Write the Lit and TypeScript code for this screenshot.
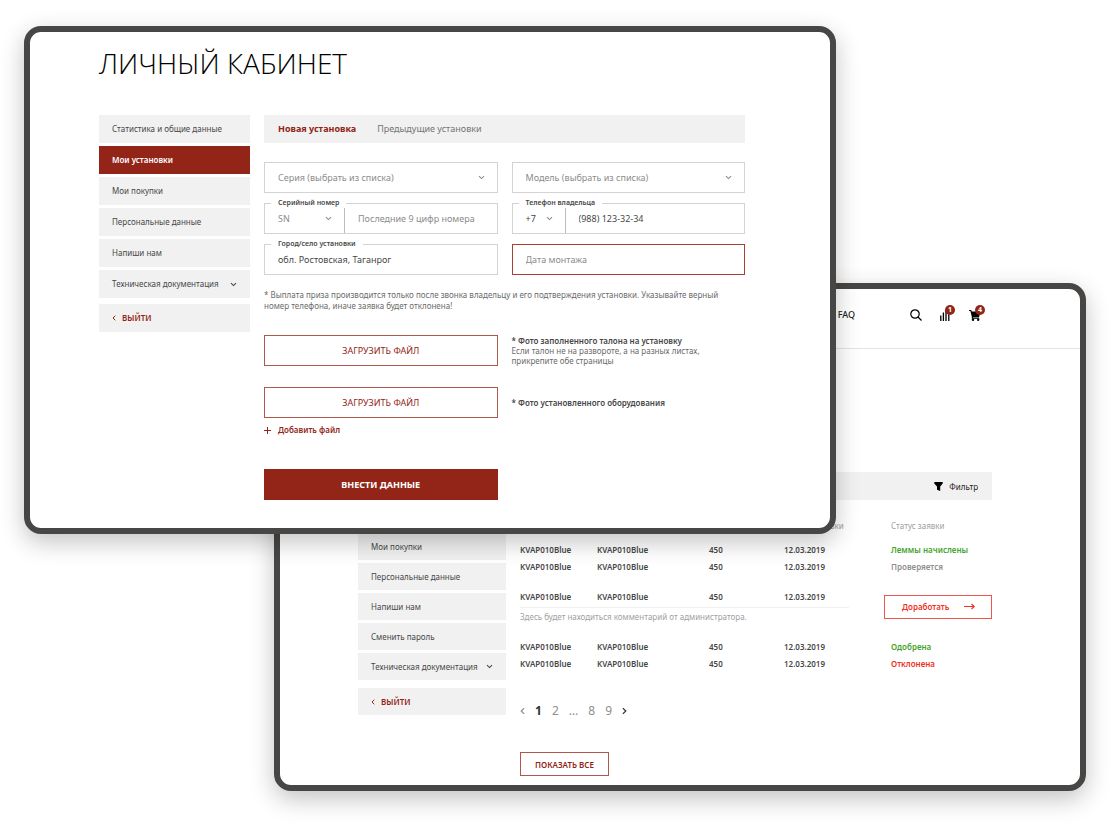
import { LitElement, html, css, svg, nothing } from "lit";
import { customElement, property } from "lit/decorators.js";
import { classMap } from "lit/directives/class-map.js";

const shared = css`
  :host {
    display: block;
  }
  *,
  *::before,
  *::after {
    box-sizing: border-box;
  }
  svg {
    display: block;
    flex: none;
  }
  button,
  input,
  select {
    font: inherit;
    color: inherit;
    background: none;
    border: 0;
    border-radius: 0;
    margin: 0;
    padding: 0;
    appearance: none;
  }
  button {
    cursor: pointer;
  }
  a {
    color: inherit;
    text-decoration: none;
  }
`;

const chevronDown = (size = 7) => svg`
  <svg class="chevron" width=${size} height=${size} viewBox="0 0 7 7" fill="none" stroke="currentColor" stroke-width="1.1" aria-hidden="true">
    <path d="M1 2.2 3.5 4.6 6 2.2" />
  </svg>`;

const chevronLeft = (w = 4, h = 6) => svg`
  <svg width=${w} height=${h} viewBox="0 0 4 6" fill="none" stroke="currentColor" stroke-width="1" aria-hidden="true">
    <path d="M3.3 .7 1 3l2.3 2.3" />
  </svg>`;

/** Navigation column of the personal account. */
@customElement("side-menu")
class SideMenu extends LitElement {
  @property({ attribute: false }) items: string[] = [];
  @property() current = "";
  @property({ type: Boolean, reflect: true }) compact = false;

  static styles = [
    shared,
    css`
      :host {
        --item-height: 28px;
        font-size: 8px;
        line-height: 12px;
        color: #474747;
      }
      :host([compact]) {
        --item-height: 27px;
      }
      .list {
        display: grid;
        gap: 3px;
        margin: 0 0 6px;
        padding: 0;
        list-style: none;
      }
      :host([compact]) .list {
        margin-bottom: 8px;
      }
      .item {
        display: flex;
        align-items: center;
        justify-content: space-between;
        min-height: var(--item-height);
        padding: 0 13px;
        background: #f1f1f1;
        white-space: nowrap;
      }
      .current {
        background: #922517;
        color: #fff;
        font-weight: 600;
      }
      .exit {
        justify-content: flex-start;
        gap: 6px;
        color: #922517;
        font-weight: 600;
      }
    `,
  ];

  render() {
    return html`
      <nav aria-label="Личный кабинет">
        <ul class="list">
          ${this.items.map(
            (item) => html`<li>
              <a
                href="#"
                class=${classMap({ item: true, current: item === this.current })}
                aria-current=${item === this.current ? "page" : nothing}
                >${item}${item === "Техническая документация" ? chevronDown() : nothing}</a
              >
            </li>`
          )}
        </ul>
        <a href="#" class="item exit">${chevronLeft()}ВЫЙТИ</a>
      </nav>
    `;
  }
}

/** Form for registering a new installation. */
@customElement("install-form")
class InstallForm extends LitElement {
  static styles = [
    shared,
    css`
      :host {
        font-size: 9px;
        line-height: 12px;
        color: #474747;
      }
      .tabs {
        display: flex;
        align-items: center;
        gap: 21px;
        min-height: 28px;
        padding: 0 14px;
        background: #f1f1f1;
        color: #757575;
      }
      .tab-active {
        color: #922517;
        font-weight: 700;
      }
      .fields {
        display: grid;
        grid-template-columns: repeat(2, minmax(0, 1fr));
        gap: 10px 14px;
        margin-top: 19px;
      }
      .field {
        position: relative;
        display: flex;
        height: 31px;
        border: 1px solid #d3d3d3;
      }
      .field.invalid {
        border-color: #a84034;
      }
      .caption {
        position: absolute;
        top: -6px;
        left: 6px;
        padding: 0 7px;
        background: #fff;
        font-size: 7px;
        line-height: 10px;
        font-weight: 600;
        white-space: nowrap;
      }
      .pick {
        display: grid;
        flex: 1;
        align-items: center;
        color: #8c8c8c;
      }
      .pick > * {
        grid-area: 1 / 1;
      }
      .pick select {
        width: 100%;
        height: 100%;
        padding: 0 13px;
      }
      .pick .chevron {
        justify-self: end;
        margin-right: 12px;
        pointer-events: none;
      }
      .serial {
        flex: 0 0 79px;
      }
      .code {
        flex: 0 0 52px;
      }
      .code select {
        color: #474747;
      }
      .text {
        flex: 1;
        min-width: 0;
        padding: 0 13px;
      }
      .split {
        border-left: 1px solid #bdbdbd;
      }
      .text::placeholder {
        color: #8c8c8c;
        opacity: 1;
      }
      .note {
        margin: 14px 0 24px;
        font-size: 8px;
        line-height: 11px;
        color: #6b6b6b;
      }
      .upload {
        display: grid;
        grid-template-columns: repeat(2, minmax(0, 1fr));
        column-gap: 14px;
        align-items: center;
      }
      .upload + .upload {
        margin-top: 21px;
      }
      .wide {
        height: 31px;
        border: 1px solid #b0574c;
        color: #922517;
      }
      .hint {
        margin: 0;
        font-size: 8px;
        line-height: 10px;
        color: #6b6b6b;
      }
      .hint b {
        display: block;
        font-weight: 600;
        color: #474747;
      }
      .add {
        display: flex;
        align-items: center;
        gap: 7px;
        margin-top: 7px;
        font-size: 8px;
        line-height: 10px;
        font-weight: 600;
        color: #922517;
      }
      .actions {
        display: grid;
        grid-template-columns: repeat(2, minmax(0, 1fr));
        column-gap: 14px;
        margin-top: 34px;
      }
      .submit {
        border-color: #922517;
        background: #922517;
        color: #fff;
        font-weight: 700;
      }
    `,
  ];

  render() {
    return html`
      <div class="tabs">
        <a href="#" class="tab-active">Новая установка</a>
        <a href="#">Предыдущие установки</a>
      </div>
      <form @submit=${(e: Event) => e.preventDefault()}>
        <div class="fields">
          <div class="field">
            <div class="pick">
              <select aria-label="Серия">
                <option>Серия (выбрать из списка)</option>
              </select>
              ${chevronDown()}
            </div>
          </div>
          <div class="field">
            <div class="pick">
              <select aria-label="Модель">
                <option>Модель (выбрать из списка)</option>
              </select>
              ${chevronDown()}
            </div>
          </div>
          <div class="field">
            <label class="caption" for="serial">Серийный номер</label>
            <div class="pick serial">
              <select aria-label="Префикс серийного номера">
                <option>SN</option>
              </select>
              ${chevronDown()}
            </div>
            <input id="serial" class="text split" placeholder="Последние 9 цифр номера" />
          </div>
          <div class="field">
            <label class="caption" for="phone">Телефон владельца</label>
            <div class="pick code">
              <select aria-label="Код страны">
                <option>+7</option>
              </select>
              ${chevronDown()}
            </div>
            <input id="phone" class="text split" type="tel" value="(988) 123-32-34" />
          </div>
          <div class="field">
            <label class="caption" for="city">Город/село установки</label>
            <input id="city" class="text" value="обл. Ростовская, Таганрог" />
          </div>
          <div class="field invalid">
            <input class="text" aria-label="Дата монтажа" placeholder="Дата монтажа" />
          </div>
        </div>
        <p class="note">
          * Выплата приза производится только после звонка владельцу и его подтверждения
          установки. Указывайте верный номер телефона, иначе заявка будет отклонена!
        </p>
        <div class="upload">
          <button type="button" class="wide">ЗАГРУЗИТЬ ФАЙЛ</button>
          <p class="hint">
            <b>* Фото заполненного талона на установку</b>
            Если талон не на развороте, а на разных листах,<br />прикрепите обе страницы
          </p>
        </div>
        <div class="upload">
          <button type="button" class="wide">ЗАГРУЗИТЬ ФАЙЛ</button>
          <p class="hint"><b>* Фото установленного оборудования</b></p>
        </div>
        <button type="button" class="add">
          <svg width="7" height="7" viewBox="0 0 7 7" stroke="currentColor" aria-hidden="true">
            <path d="M3.5 0v7M0 3.5h7" />
          </svg>
          Добавить файл
        </button>
        <div class="actions">
          <button type="submit" class="wide submit">ВНЕСТИ ДАННЫЕ</button>
        </div>
      </form>
    `;
  }
}

interface Claim {
  status: string;
  tone: string;
  gap?: boolean;
  comment?: string;
}

const claims: Claim[] = [
  { status: "Леммы начислены", tone: "good" },
  { status: "Проверяется", tone: "wait" },
  {
    status: "Доработать",
    tone: "rework",
    gap: true,
    comment: "Здесь будет находиться комментарий от администратора.",
  },
  { status: "Одобрена", tone: "good", gap: true },
  { status: "Отклонена", tone: "bad" },
];

/** Table of earlier installations with their claim statuses. */
@customElement("claims-list")
class ClaimsList extends LitElement {
  static styles = [
    shared,
    css`
      :host {
        font-size: 8px;
        line-height: 17px;
        color: #474747;
      }
      .bar {
        display: flex;
        align-items: center;
        justify-content: flex-end;
        min-height: 28px;
        padding: 0 14px;
        background: #f1f1f1;
      }
      .filter {
        display: flex;
        align-items: center;
        gap: 6px;
        color: #222;
      }
      .table {
        width: 100%;
        margin-top: 17px;
        table-layout: fixed;
        border-collapse: collapse;
      }
      .c-serial {
        width: 77px;
      }
      .c-model {
        width: 112px;
      }
      .c-sum {
        width: 75px;
      }
      .c-date {
        width: 100px;
      }
      th {
        padding: 0 0 7px;
        font-weight: 400;
        text-align: left;
        color: #a0a0a0;
        white-space: nowrap;
      }
      td {
        padding: 0;
        font-weight: 600;
        vertical-align: top;
        white-space: nowrap;
      }
      .gap td {
        padding-top: 13px;
      }
      .noted td {
        padding-bottom: 2px;
      }
      .status {
        padding-left: 7px;
      }
      .good {
        color: #46a32c;
      }
      .wait {
        color: #8f8f8f;
      }
      .bad {
        color: #ee3124;
      }
      .noted td.action {
        padding-bottom: 0;
        vertical-align: middle;
      }
      .rework {
        display: flex;
        align-items: center;
        justify-content: space-between;
        width: 100%;
        height: 24px;
        padding: 0 16px 0 17px;
        border: 1px solid #f0554b;
        color: #ee3124;
      }
      .comment {
        margin-right: 35px;
        border-top: 1px solid #efefef;
        font-weight: 400;
        color: #a0a0a0;
      }
      .pages {
        display: flex;
        align-items: center;
        gap: 10px;
        margin-top: 31px;
        font-size: 12px;
        line-height: 16px;
        color: #8f8f8f;
      }
      .page-current {
        font-weight: 700;
        color: #333;
      }
      .next {
        transform: scaleX(-1);
        color: #333;
      }
      .all {
        height: 24px;
        margin-top: 33px;
        padding: 0 14px;
        border: 1px solid #b0574c;
        font-weight: 600;
        color: #922517;
      }
    `,
  ];

  private row(c: Claim) {
    const cells = html`
      <td>KVAP010Blue</td>
      <td>KVAP010Blue</td>
      <td>450</td>
      <td>12.03.2019</td>
    `;
    if (!c.comment) {
      return html`<tr class=${classMap({ gap: !!c.gap })}>
        ${cells}
        <td class="status ${c.tone}">${c.status}</td>
      </tr>`;
    }
    return html`
      <tr class="gap noted">
        ${cells}
        <td class="action" rowspan="2">
          <button class="rework">
            ${c.status}
            <svg width="11" height="8" viewBox="0 0 11 8" fill="none" stroke="currentColor" stroke-width="1.2" aria-hidden="true">
              <path d="M0 3.5h10M7.6 1 10.1 3.5 7.6 6" />
            </svg>
          </button>
        </td>
      </tr>
      <tr>
        <td colspan="4"><div class="comment">${c.comment}</div></td>
      </tr>
    `;
  }

  render() {
    return html`
      <div class="bar">
        <button class="filter">
          <svg width="9" height="9" viewBox="0 0 9 9" fill="#000" aria-hidden="true">
            <path d="M.3 0h8.4v1.6L6.2 4.6V9L3 7.8V4.6L.3 1.6z" />
          </svg>
          Фильтр
        </button>
      </div>
      <table class="table">
        <colgroup>
          <col class="c-serial" />
          <col class="c-model" />
          <col class="c-sum" />
          <col class="c-date" />
          <col />
        </colgroup>
        <thead>
          <tr>
            <td colspan="3"></td>
            <th scope="col">Дата установки</th>
            <th scope="col" class="status">Статус заявки</th>
          </tr>
        </thead>
        <tbody>
          ${claims.map((c) => this.row(c))}
        </tbody>
      </table>
      <div class="pages">
        <button aria-label="Назад">${chevronLeft(5, 8)}</button>
        <button class="page-current" aria-current="page">1</button>
        <button>2</button>
        <span>…</span>
        <button>8</button>
        <button>9</button>
        <button class="next" aria-label="Вперёд">${chevronLeft(5, 8)}</button>
      </div>
      <button class="all">ПОКАЗАТЬ ВСЕ</button>
    `;
  }
}

@customElement("app-root")
class AppRoot extends LitElement {
  static styles = [
    shared,
    css`
      :host {
        min-height: 100vh;
        background: #fff;
        font-family: "Noto Sans", "Open Sans", sans-serif;
      }
      /* Both windows share one grid cell, so the front one overlaps the back one. */
      .stage {
        display: grid;
        padding: 26px 24px 34px;
      }
      .window {
        grid-area: 1 / 1;
        align-self: start;
        width: calc(100% - 250px);
        border: 6px solid #474644;
        border-radius: 17px;
        background: #fff;
        box-shadow: 0 8px 24px rgba(0, 0, 0, 0.24);
      }
      .front {
        z-index: 1;
        padding: 15px 85px 28px 69px;
      }
      .back {
        justify-self: end;
        margin-top: 257px;
      }
      .title {
        margin: 0 0 36px;
        font-family: "Open Sans", "Noto Sans", sans-serif;
        font-size: 28px;
        line-height: 32px;
        font-weight: 300;
        color: #000;
      }
      .columns {
        display: grid;
        grid-template-columns: 151px minmax(0, 1fr);
        column-gap: 14px;
        align-items: start;
      }
      .header {
        display: flex;
        align-items: center;
        justify-content: flex-end;
        height: 60px;
        padding: 0 99px 8px 0;
        border-bottom: 1px solid #e4e4e4;
        color: #000;
      }
      .faq {
        margin-right: 55px;
        font-size: 9px;
        line-height: 12px;
        font-weight: 500;
        color: #222;
      }
      .tools {
        display: flex;
        align-items: center;
        gap: 18px;
      }
      .tool {
        position: relative;
      }
      .badge {
        position: absolute;
        top: -4px;
        right: -4px;
        width: 10px;
        height: 10px;
        border-radius: 50%;
        background: #922517;
        color: #fff;
        font-size: 7px;
        line-height: 10px;
        font-weight: 700;
        text-align: center;
      }
      .back .columns {
        grid-template-columns: 148px minmax(0, 1fr);
        padding: 123px 88px 9px 78px;
      }
      .back side-menu {
        margin-top: 61px;
      }
    `,
  ];

  render() {
    return html`
      <main class="stage">
        <section class="window back">
          <header class="header">
            <a href="#" class="faq">FAQ</a>
            <div class="tools">
              <button class="tool" aria-label="Поиск">
                <svg width="12" height="12" viewBox="0 0 12 12" fill="none" stroke="currentColor" stroke-width="1.2">
                  <circle cx="5" cy="5" r="4.2" />
                  <path d="m8 8 3.5 3.5" />
                </svg>
              </button>
              <button class="tool" aria-label="Сравнение">
                <svg width="11" height="12" viewBox="0 0 11 12" fill="none" stroke="currentColor" stroke-width="1.3">
                  <path d="M.8 6.5V12M3.4 3.5V12M6 1v11M8.8 3v9" />
                </svg>
                <span class="badge">1</span>
              </button>
              <button class="tool" aria-label="Корзина">
                <svg width="12" height="12" viewBox="0 0 12 12" fill="currentColor">
                  <path d="M0 1h2.2l.6 1.6h8.9L10 8.2H4v.5h6.2v1H2.8V7.8L1.4 2H0z" />
                  <circle cx="4" cy="10.8" r="1.2" />
                  <circle cx="9.2" cy="10.8" r="1.2" />
                </svg>
                <span class="badge">4</span>
              </button>
            </div>
          </header>
          <div class="columns">
            <side-menu
              compact
              .items=${[
                "Мои покупки",
                "Персональные данные",
                "Напиши нам",
                "Сменить пароль",
                "Техническая документация",
              ]}
            ></side-menu>
            <claims-list></claims-list>
          </div>
        </section>

        <section class="window front">
          <h1 class="title">ЛИЧНЫЙ КАБИНЕТ</h1>
          <div class="columns">
            <side-menu
              current="Мои установки"
              .items=${[
                "Статистика и общие данные",
                "Мои установки",
                "Мои покупки",
                "Персональные данные",
                "Напиши нам",
                "Техническая документация",
              ]}
            ></side-menu>
            <install-form></install-form>
          </div>
        </section>
      </main>
    `;
  }
}
